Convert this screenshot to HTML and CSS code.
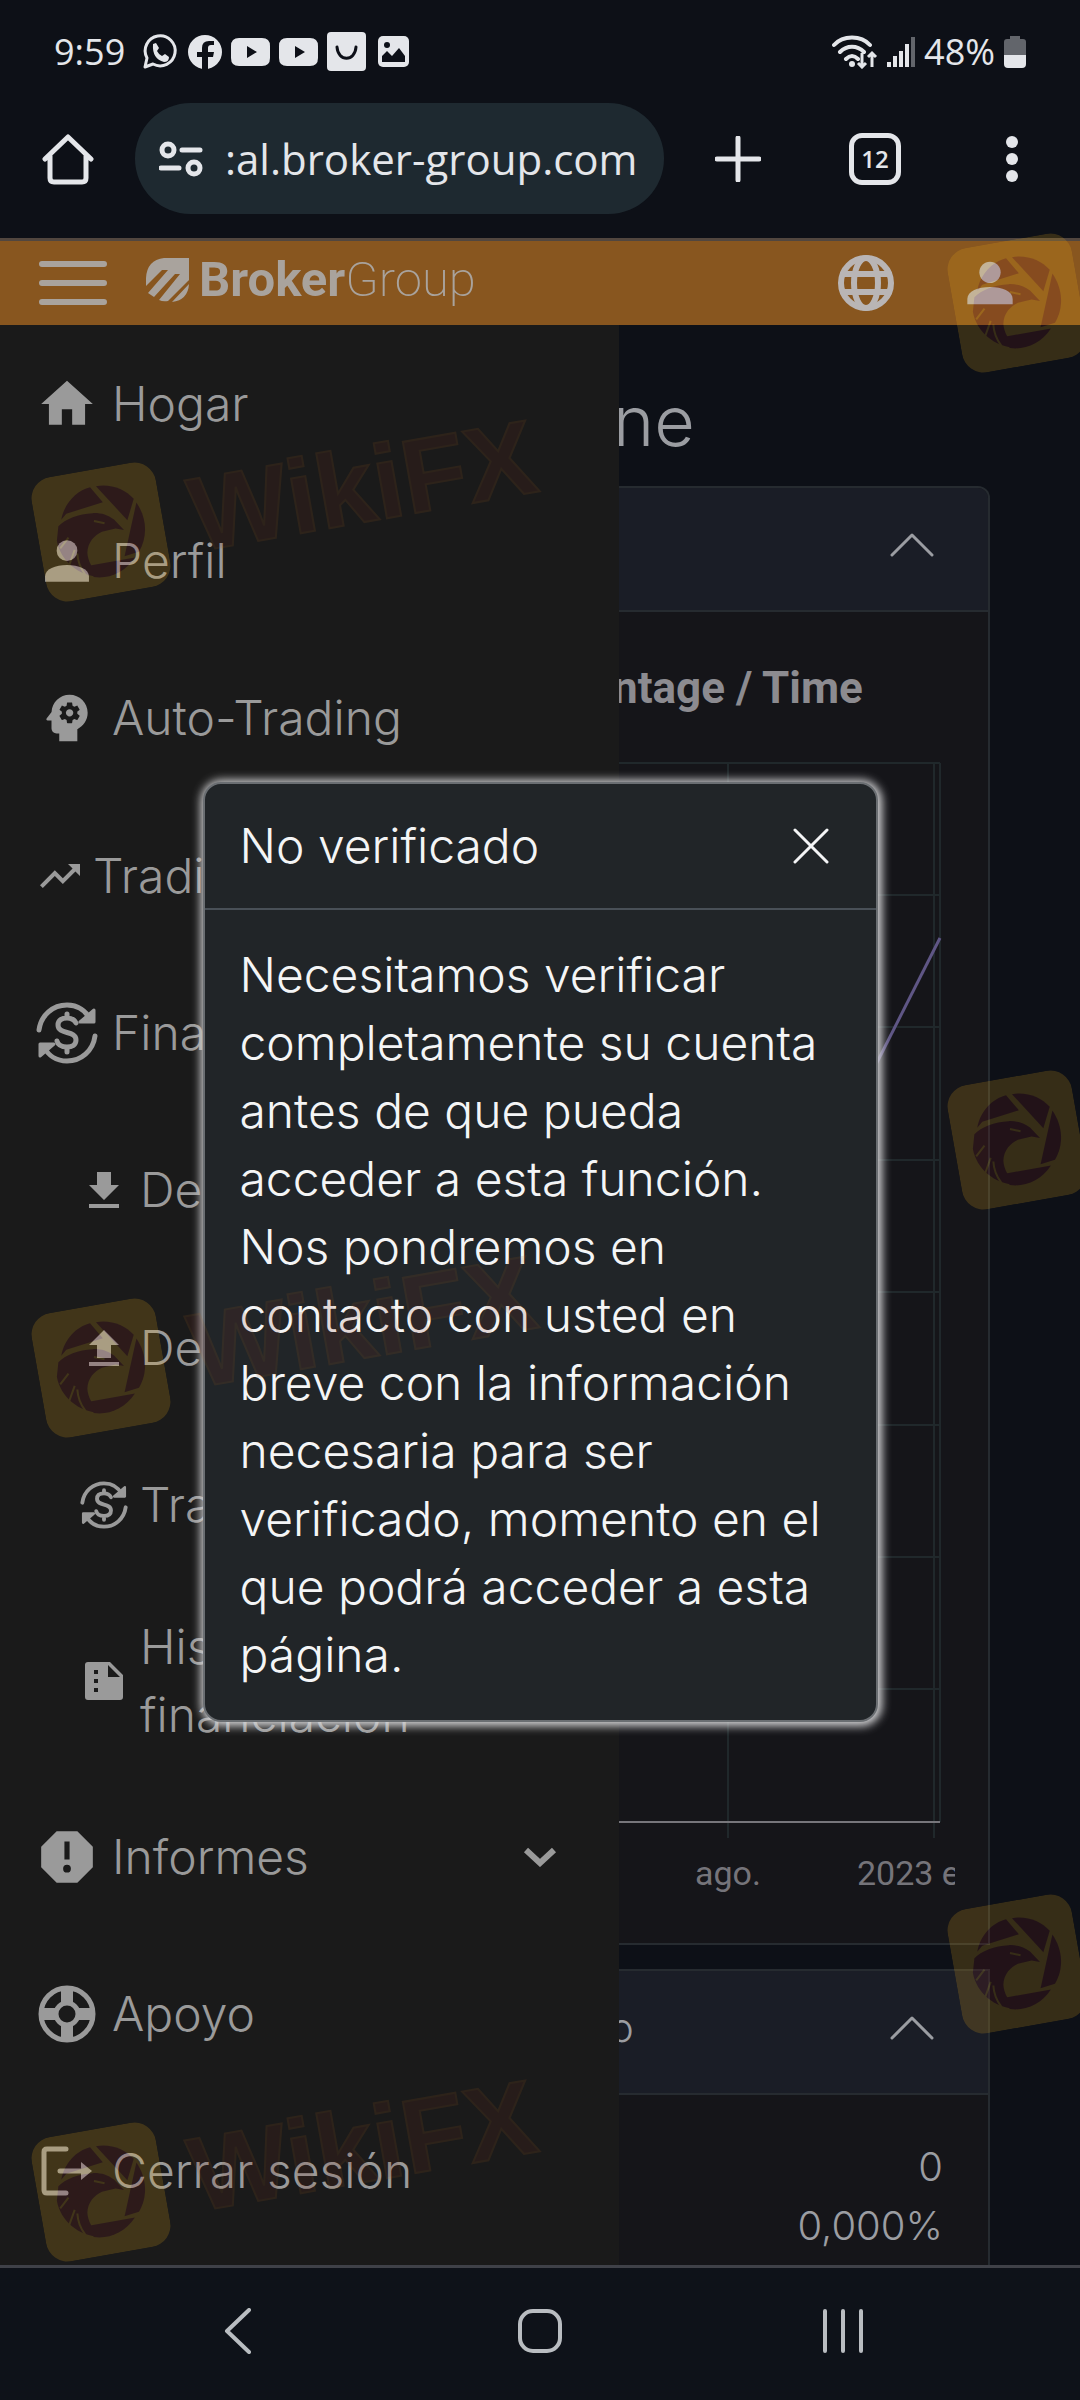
FILE: index.html
```html
<!DOCTYPE html>
<html lang="es">
<head>
    <meta charset="utf-8">
    <meta name="viewport" content="width=device-width, initial-scale=1">
    <title>BrokerGroup</title>
    <link rel="stylesheet" href="styles.css">
</head>
<body>
    <!-- Shared icons -->
    <svg class="sprite" aria-hidden="true">
        <symbol id="icon-person" viewBox="0 0 24 24">
            <circle cx="12" cy="8" r="4"/>
            <path d="M3.500 20v-2c0-3 4-4.500 8.500-4.500s8.500 1.500 8.500 4.500v2z"/>
        </symbol>
        <symbol id="icon-exchange" viewBox="0 0 62 62">
            <g fill="none" stroke="currentColor" stroke-width="5" stroke-linecap="round" stroke-linejoin="round">
                <path d="M3 28C5 13 17 3 31 3c11 0 19 6 23 14M59 34C57 49 45 59 31 59c-11 0-19-6-23-14"/>
                <path d="M44 20h14V8zM18 42H4v12z" stroke-width="3" fill="currentColor"/>
                <path d="M40 21c-2-4-5-5-9-5-5 0-9 2-9 7 0 10 18 5 18 15 0 5-4 7-9 7s-9-2-10-6M31 12v4M31 46v4"/>
            </g>
        </symbol>
        <symbol id="icon-up" viewBox="0 0 44 24">
            <path d="M2 22L22 2l20 20" fill="none" stroke="currentColor" stroke-width="3" stroke-linecap="round" stroke-linejoin="round"/>
        </symbol>
        <symbol id="icon-video" viewBox="0 0 39 28">
            <path fill-rule="evenodd" d="M8 0h23q8 0 8 8v12q0 8-8 8H8q-8 0-8-8V8q0-8 8-8zM16 8v12l10-6z"/>
        </symbol>
        <symbol id="icon-eagle" viewBox="0 0 126 126">
            <rect width="126" height="126" rx="22" fill="#f0af19"/>
            <g fill="#821f1f">
                <path d="M26 44C32 28 46 18 60 17l10 17-38 5z"/>
                <path d="M66 17c15 0 28 8 35 19l-10 20z"/>
                <path d="M103 40c8 18 5 36-6 49l-15 2z"/>
                <path d="M92 94c-12 13-30 17-44 12l-3-12z"/>
                <path d="M22 50c8-6 22-9 36-7 8 1 14 4 20 10l8 12-8-3-14 1c-8 2-16 8-18 18-1 8 2 17 9 26C33 103 18 84 18 64z"/>
            </g>
            <g fill="none" stroke="#f0af19" stroke-width="2">
                <path d="M58 51l10 4M20 72l10-9M26 90l8-14M40 102c-4-8-5-14-4-22"/>
            </g>
        </symbol>
    </svg>

    <header class="browser">
        <div class="status">
            <span class="clock">9:59</span>
            <svg width="38" height="38" viewBox="0 0 38 38">
                <path d="M4 34l2-9a15 15 0 1 1 6 6z" fill="none" stroke="currentColor" stroke-width="3" stroke-linejoin="round"/>
                <path d="M12 11l3-1 3 5-2 3q2 4 5 5l3-2 4 3q0 5-5 5Q11 26 12 11z"/>
            </svg>
            <svg width="34" height="34" viewBox="0 0 34 34">
                <path fill-rule="evenodd" d="M17 0a17 17 0 1 1 0 34 17 17 0 0 1 0-34zM14 34h6V22h5l1-5h-6v-4q0-3 3-3h3V6h-5q-7 0-7 7v4H9v5h5z"/>
            </svg>
            <svg width="39" height="28"><use href="#icon-video"/></svg>
            <svg width="39" height="28"><use href="#icon-video"/></svg>
            <svg width="39" height="39" viewBox="0 0 39 39">
                <rect width="39" height="39" rx="4"/>
                <path d="M10 15c1 15 18 15 19 0" fill="none" stroke="#0d1018" stroke-width="3" stroke-linecap="round"/>
            </svg>
            <svg class="picture" width="31" height="31" viewBox="0 0 31 31">
                <rect width="31" height="31" rx="5"/>
                <circle cx="9" cy="9" r="3" fill="#0d1018"/>
                <path d="M4 26v-6l5-5 5 5 7-8 6 8v6z" fill="#0d1018"/>
            </svg>
            <span class="spacer"></span>
            <svg width="46" height="34" viewBox="0 0 46 34">
                <g fill="none" stroke="currentColor" stroke-width="4" stroke-linecap="round">
                    <path d="M2 10c9-10 27-10 36 0M8 17c7-7 17-7 24 0M14 24c4-4 8-4 12 0"/>
                </g>
                <circle cx="20" cy="29" r="3"/>
                <path d="M30 18v14M26 28l4 4 4-4M40 32V18M36 22l4-4 4 4" fill="none" stroke="currentColor" stroke-width="3"/>
            </svg>
            <svg width="28" height="30" viewBox="0 0 28 30">
                <path d="M0 25h4v5H0zM6 19h4v11H6zM12 14h4v16h-4zM18 7h4v23h-4z"/>
                <path d="M24 0h4v30h-4z" opacity=".4"/>
            </svg>
            <span class="percent">48%</span>
            <svg width="22" height="32" viewBox="0 0 22 32">
                <path d="M6 0h10v3h3q3 0 3 3v13H0V6q0-3 3-3h3z" opacity=".4"/>
                <path d="M0 19h22v9q0 4-4 4H4q-4 0-4-4z"/>
            </svg>
        </div>
        <div class="toolbar">
            <button class="tool" aria-label="Inicio">
                <svg width="52" height="52" viewBox="0 0 52 52" class="line">
                    <path d="M3 26L26 4l23 22M8 23v22q0 4 4 4h28q4 0 4-4V23"/>
                </svg>
            </button>
            <div class="address">
                <svg width="44" height="36" viewBox="0 0 44 36" class="line">
                    <circle cx="9" cy="9" r="6"/><path d="M23 9h18M2 27h18"/><circle cx="35" cy="27" r="6"/>
                </svg>
                <input type="text" value=":al.broker-group.com" aria-label="Dirección">
            </div>
            <div class="tools">
                <button class="tool" aria-label="Nueva pestaña">
                    <svg width="46" height="46" viewBox="0 0 46 46" class="line"><path d="M23 2v42M2 23h42"/></svg>
                </button>
                <button class="tool tabs" aria-label="Pestañas">12</button>
                <button class="tool" aria-label="Menú">
                    <svg width="12" height="46" viewBox="0 0 12 46">
                        <circle cx="6" cy="6" r="6"/><circle cx="6" cy="23" r="6"/><circle cx="6" cy="40" r="6"/>
                    </svg>
                </button>
            </div>
        </div>
    </header>

    <div class="page">
        <div class="topbar">
            <button class="tool burger" aria-label="Abrir menú">
                <svg width="70" height="46" viewBox="0 0 70 46" class="line"><path d="M4 4h62M4 23h62M4 42h62"/></svg>
            </button>
            <a class="brand" href="#">
                <svg width="43" height="44" viewBox="0 0 43 44">
                    <path d="M43 0v26q-1 16-17 18l17-18zM18 0h25v22L22 43q-5 1-9-1l21-26h-5L8 39l-6-4 20-23h-6L0 28v-8Q1 2 18 0z"/>
                </svg>
                <span><b>Broker</b>Group</span>
            </a>
            <span class="spacer"></span>
            <button class="tool globe" aria-label="Idioma">
                <svg width="58" height="58" viewBox="0 0 58 58" class="line">
                    <circle cx="29" cy="29" r="25"/><ellipse cx="29" cy="29" rx="12" ry="25"/><path d="M6 20h46M6 38h46"/>
                </svg>
            </button>
            <button class="tool account" aria-label="Cuenta">
                <svg width="64" height="64"><use href="#icon-person"/></svg>
            </button>
        </div>

        <div class="columns">
            <nav class="drawer">
                <a href="#"><svg class="icon" viewBox="0 0 24 24"><path d="M10 20v-6h4v6h5v-8h3L12 3 2 12h3v8z"/></svg>Hogar</a>
                <a href="#"><svg class="icon" viewBox="0 0 24 24"><use href="#icon-person"/></svg>Perfil</a>
                <a href="#"><svg class="icon" viewBox="0 0 24 24"><path d="M13 8.570c-.79 0-1.430.64-1.430 1.430s.64 1.430 1.430 1.430 1.430-.64 1.430-1.430-.64-1.430-1.430-1.430z"/><path d="M13 3C9.250 3 6.200 5.940 6.020 9.640L4.100 12.200c-.25.33-.01.8.4.8H6v3c0 1.100.9 2 2 2h1v3h7v-4.680c2.360-1.120 4-3.530 4-6.320 0-3.870-3.130-7-7-7zm3 7c0 .13-.01.26-.02.39l.83.66c.08.06.1.16.05.25l-.8 1.390c-.05.09-.16.12-.24.09l-.99-.4c-.21.16-.43.29-.67.39L14 13.830c-.01.1-.1.17-.2.17h-1.600c-.1 0-.18-.07-.2-.17l-.15-1.060c-.25-.1-.47-.23-.68-.39l-.99.4c-.09.03-.2 0-.25-.09l-.8-1.390c-.05-.08-.03-.19.05-.25l.84-.66c-.01-.13-.02-.26-.02-.39s.02-.27.04-.39l-.85-.66c-.08-.06-.1-.16-.05-.26l.8-1.380c.05-.09.15-.12.24-.09l1 .4c.2-.15.43-.29.67-.39L12 6.170c.02-.1.1-.17.2-.17h1.600c.1 0 .18.07.2.17l.15 1.060c.24.1.46.23.67.39l1-.4c.09-.03.2 0 .24.09l.8 1.380c.05.09.03.2-.05.26l-.85.66c.03.12.04.25.04.39z"/></svg>Auto-Trading</a>
                <a href="#" class="compact"><svg class="icon small" viewBox="0 0 24 24"><path d="M16 6l2.290 2.290-4.880 4.880-4-4L2 16.590 3.410 18l6-6 4 4 6.300-6.290L22 12V6z"/></svg>Trading</a>
                <a href="#"><svg class="icon" viewBox="0 0 62 62"><use href="#icon-exchange"/></svg>Financiación</a>
                <a href="#" class="sub"><svg class="icon small" viewBox="0 0 48 48"><path d="M17 6h14v13h8L24 34 9 19h8zM9 38h30v4H9z"/></svg>Depósito</a>
                <a href="#" class="sub"><svg class="icon small" viewBox="0 0 48 48"><path d="M17 34h14V21h8L24 6 9 21h8zM9 38h30v4H9z"/></svg>Desembolso</a>
                <a href="#" class="sub"><svg class="icon small" viewBox="0 0 62 62"><use href="#icon-exchange"/></svg>Transferencia</a>
                <a href="#" class="sub tall">
                    <svg class="icon small" viewBox="0 0 48 48"><path fill-rule="evenodd" d="M8 5h22l13 13v22q0 3-3 3H8q-3 0-3-3V8q0-3 3-3zM28 8v12h12zM14 13v4h4v-4zM14 22v4h4v-4zM14 31v4h4v-4z"/></svg>
                    <span>Historial de<br>financiación</span>
                </a>
                <a href="#">
                    <svg class="icon" viewBox="0 0 24 24"><path fill-rule="evenodd" d="M16 2H8L2 8v8l6 6h8l6-6V8zM11 6h2v7h-2zM12 15a1.500 1.500 0 1 1 0 3 1.500 1.500 0 0 1 0-3z"/></svg>Informes
                    <svg class="caret" viewBox="0 0 34 20"><path d="M3 3l14 13L31 3"/></svg>
                </a>
                <a href="#">
                    <svg class="icon" viewBox="0 0 62 62">
                        <g fill="none" stroke="currentColor">
                            <circle cx="31" cy="31" r="26" stroke-width="5"/>
                            <circle cx="31" cy="31" r="11" stroke-width="5"/>
                            <path d="M31 5v14M31 43v14M5 31h14M43 31h14" stroke-width="12"/>
                        </g>
                    </svg>Apoyo
                </a>
                <a href="#">
                    <svg class="icon" viewBox="0 0 62 62">
                        <path d="M30 9H11q-3 0-3 3v38q0 3 3 3h19M24 31h24" fill="none" stroke="currentColor" stroke-width="5" stroke-linecap="round"/>
                        <path d="M45 22l11 9-11 9z"/>
                    </svg>Cerrar sesión
                </a>
            </nav>

            <main class="content">
                <h1>ne</h1>
                <section class="card">
                    <header><span></span><svg class="toggle"><use href="#icon-up"/></svg></header>
                    <h2>ntage / Time</h2>
                    <svg class="chart" viewBox="0 0 336 1150">
                        <g class="grid">
                            <path d="M0 12h321M0 144h321M0 276h321M0 409h321M0 541h321M0 674h321M0 806h321M0 938h321"/>
                            <path d="M109 12v1075M315 12v1075M321 12v1059"/>
                        </g>
                        <path class="axis" d="M0 1071h321"/>
                        <path class="plot" d="M239 349L321 187"/>
                        <text x="76" y="1134">ago.</text>
                        <text x="238" y="1134">2023 ene.</text>
                    </svg>
                </section>
                <section class="card">
                    <header><span>o</span><svg class="toggle"><use href="#icon-up"/></svg></header>
                    <div class="stats"><div>0</div><div>0,000%</div></div>
                </section>
            </main>
        </div>

        <div class="overlay">
            <section class="modal" role="dialog" aria-labelledby="modal-title">
                <header>
                    <h2 id="modal-title">No verificado</h2>
                    <button class="tool" aria-label="Cerrar">
                        <svg width="36" height="36" viewBox="0 0 36 36"><path d="M2 2l32 32M34 2L2 34" stroke="currentColor" stroke-width="3" stroke-linecap="round"/></svg>
                    </button>
                </header>
                <p>Necesitamos verificar<br>completamente su cuenta<br>antes de que pueda<br>acceder a esta función.<br>Nos pondremos en<br>contacto con usted en<br>breve con la información<br>necesaria para ser<br>verificado, momento en el<br>que podrá acceder a esta<br>página.</p>
            </section>
        </div>
    </div>

    <footer class="navbar">
        <button class="tool" aria-label="Atrás"><svg width="44" height="46" viewBox="0 0 44 46" class="thin"><path d="M34 2L12 23l22 21"/></svg></button>
        <button class="tool" aria-label="Inicio"><svg width="44" height="44" viewBox="0 0 44 44" class="thin"><rect x="2" y="2" width="40" height="40" rx="13"/></svg></button>
        <button class="tool" aria-label="Recientes"><svg width="44" height="44" viewBox="0 0 44 44" class="thin"><path d="M4 2v40M22 2v40M40 2v40"/></svg></button>
    </footer>

    <div class="watermarks" aria-hidden="true">
        <div class="mark left first"><svg><use href="#icon-eagle"/></svg><span>WikiFX</span></div>
        <div class="mark left second"><svg><use href="#icon-eagle"/></svg><span>WikiFX</span></div>
        <div class="mark left third"><svg><use href="#icon-eagle"/></svg><span>WikiFX</span></div>
        <div class="mark right first"><svg><use href="#icon-eagle"/></svg></div>
        <div class="mark right second"><svg><use href="#icon-eagle"/></svg></div>
        <div class="mark right third"><svg><use href="#icon-eagle"/></svg></div>
    </div>
</body>
</html>
```

FILE: styles.css
```css
* {
    box-sizing: border-box;
}

body {
    margin: 0;
    min-height: 100vh;
    position: relative;
    display: flex;
    flex-direction: column;
    background-color: #0d1017;
    color: #9a9a9a;
    font-family: Inter, "Open Sans", sans-serif;
    font-size: 48px;
    font-weight: 300;
    line-height: 68px;
}

svg {
    display: block;
    flex: none;
    fill: currentColor;
}

h1, h2, p {
    margin: 0;
    font-weight: 300;
}

a {
    color: inherit;
    text-decoration: none;
}

.sprite {
    position: absolute;
    width: 0;
    height: 0;
}

.spacer {
    flex: 1;
}

.tool {
    display: flex;
    align-items: center;
    justify-content: center;
    flex: none;
    width: 60px;
    height: 60px;
    padding: 0;
    border: 0;
    background: none;
    color: inherit;
}

.line {
    fill: none;
    stroke: currentColor;
    stroke-width: 5;
    stroke-linecap: round;
    stroke-linejoin: round;
}

.thin {
    fill: none;
    stroke: currentColor;
    stroke-width: 4;
    stroke-linecap: round;
    stroke-linejoin: round;
}

/* Phone status bar and browser toolbar */
.browser {
    color: #e4e6ea;
    font-family: "Open Sans", sans-serif;
    font-weight: 400;
}

.status {
    display: flex;
    align-items: center;
    gap: 9px;
    height: 103px;
    padding: 0 54px;
    font-size: 36px;
    line-height: 40px;
}

.clock {
    width: 78px;
}

.picture {
    margin-left: 3px;
}

.toolbar {
    display: flex;
    align-items: center;
    height: 135px;
    padding: 0 38px 24px;
}

.address {
    display: flex;
    align-items: center;
    flex: 1;
    min-width: 0;
    height: 111px;
    margin-left: 37px;
    padding: 0 16px 0 24px;
    gap: 22px;
    border-radius: 56px;
    background-color: #1e2930;
}

.address input {
    flex: 1;
    min-width: 0;
    padding: 0;
    border: 0;
    background: none;
    color: inherit;
    font: inherit;
    font-size: 42px;
}

.tools {
    display: flex;
    gap: 77px;
    margin-left: 44px;
}

.tabs {
    width: 52px;
    height: 52px;
    margin: 4px;
    border: 5px solid;
    border-radius: 13px;
    font-family: inherit;
    font-size: 24px;
    font-weight: 600;
}

/* Site header */
.page {
    position: relative;
    display: flex;
    flex-direction: column;
    flex: 1;
}

.topbar {
    display: flex;
    align-items: center;
    height: 87px;
    padding: 0 60px 0 38px;
    border-top: 3px solid #51463f;
    background-color: #88561f;
    color: #a9a39d;
}

.topbar .line {
    stroke-width: 6;
}

.burger {
    width: 70px;
}

.brand {
    display: flex;
    align-items: center;
    gap: 10px;
    margin-left: 38px;
    padding-bottom: 6px;
    font-family: Roboto, sans-serif;
    font-size: 49px;
    font-weight: 200;
    line-height: 64px;
}

.brand b {
    font-weight: 700;
}

.globe, .account {
    color: #b9b5b5;
}

.account {
    margin-left: 64px;
}

.columns {
    display: flex;
    flex: 1;
}

/* Side menu */
.drawer {
    display: flex;
    flex-direction: column;
    flex: none;
    width: 57.3%;
    padding-bottom: 15px;
    background-color: #1a1a1a;
}

.drawer a {
    display: flex;
    align-items: center;
    gap: 14px;
    flex: 1 1 157px;
    padding: 0 62px 0 36px;
}

.drawer .sub {
    gap: 12px;
    padding-left: 80px;
}

.drawer .compact {
    gap: 9px;
}

.drawer .tall {
    flex: 0 0 194px;
}

.icon {
    width: 62px;
    height: 62px;
}

.small {
    width: 48px;
    height: 48px;
}

.caret {
    width: 34px;
    height: 20px;
    margin-left: auto;
    fill: none;
    stroke: currentColor;
    stroke-width: 6;
}

/* Dashboard cards */
.content {
    display: flex;
    flex-direction: column;
    flex: 1;
    min-width: 0;
    padding-right: 90px;
    overflow: hidden;
    color: #9b9da2;
}

.content h1 {
    display: flex;
    justify-content: flex-end;
    width: 76px;
    height: 161px;
    padding-top: 48px;
    font-size: 70px;
    line-height: 96px;
}

.card {
    margin-bottom: 24px;
    border: solid #262b30;
    border-width: 2px 2px 2px 0;
    border-top-right-radius: 12px;
    background-color: #151519;
    overflow: hidden;
}

.card:last-child {
    flex: 1;
    margin-bottom: 0;
    border-bottom: 0;
    border-top-right-radius: 0;
}

.card header {
    display: flex;
    align-items: center;
    justify-content: space-between;
    height: 124px;
    padding: 0 54px 8px 0;
    border-bottom: 2px solid #262b30;
    background-color: #1a1d26;
    font-size: 40px;
}

.card header span {
    display: flex;
    justify-content: flex-end;
    width: 15px;
}

.toggle {
    width: 44px;
    height: 24px;
}

.card h2 {
    display: flex;
    justify-content: flex-end;
    width: 244px;
    height: 88px;
    margin-top: 51px;
    color: #8c8b90;
    font-family: Roboto, sans-serif;
    font-size: 44px;
    font-weight: 700;
    line-height: 50px;
    white-space: nowrap;
}

.chart {
    width: 336px;
    height: 1150px;
    margin-bottom: 42px;
    overflow: hidden;
    font-family: Roboto, sans-serif;
    font-size: 34px;
    font-weight: 400;
    fill: #75747a;
}

.grid {
    fill: none;
    stroke: #20282b;
    stroke-width: 2;
}

.axis {
    stroke: #77767b;
    stroke-width: 2;
}

.plot {
    stroke: #5f5685;
    stroke-width: 3;
}

.stats {
    padding: 42px 45px 0 0;
    font-size: 40px;
    line-height: 59px;
    text-align: right;
}

/* Verification message */
.overlay {
    position: absolute;
    inset: 0;
    display: flex;
    align-items: center;
    justify-content: center;
}

.modal {
    width: 62.5%;
    border: 2px solid #6a6e72;
    border-radius: 18px;
    background-color: #212528;
    box-shadow: 1px 1px 10px 3px #d8d8da;
    color: #f4f5f6;
}

.modal header {
    display: flex;
    align-items: center;
    justify-content: space-between;
    height: 126px;
    padding: 0 35px;
    border-bottom: 2px solid #495057;
}

.modal h2 {
    font-size: 48px;
}

.modal p {
    padding: 31px 0 31px 35px;
    white-space: nowrap;
}

/* Android buttons */
.navbar {
    display: flex;
    align-items: center;
    justify-content: space-between;
    height: 135px;
    padding: 0 207px 7px;
    border-top: 3px solid #3f4148;
    background-color: #0e1219;
    color: #b9bdc1;
}

/* Watermarks */
.watermarks {
    position: absolute;
    inset: 0;
    overflow: hidden;
    pointer-events: none;
}

.mark {
    position: absolute;
    display: flex;
    align-items: center;
    gap: 28px;
    height: 126px;
    opacity: .18;
    transform: rotate(-10deg);
    transform-origin: 63px 63px;
}

.mark svg {
    width: 126px;
    height: 126px;
}

.mark span {
    color: #7a2a1f;
    font-family: "Liberation Sans", sans-serif;
    font-size: 105px;
    font-weight: 700;
    line-height: 126px;
    opacity: .8;
    -webkit-text-stroke: 2px #a05a20;
}

.left {
    left: 38px;
}

.right {
    left: 954px;
}

.left.first {
    top: 469px;
}

.left.second {
    top: 1305px;
}

.left.third {
    top: 2129px;
}

.right.first {
    top: 240px;
}

.right.second {
    top: 1077px;
}

.right.third {
    top: 1901px;
}
```
